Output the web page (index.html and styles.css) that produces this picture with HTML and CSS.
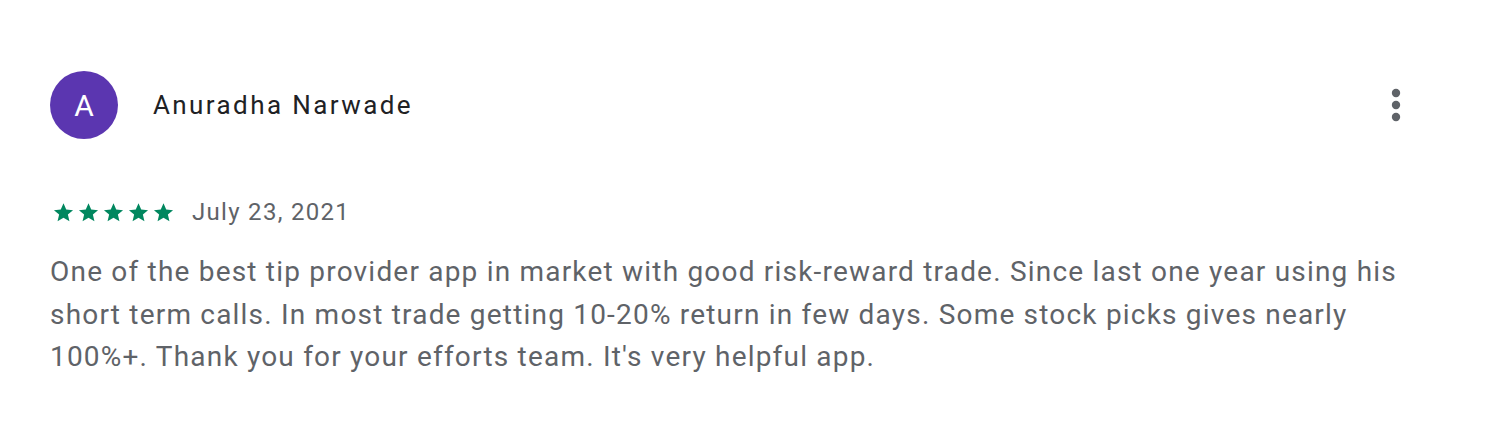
FILE: index.html
```html
<!DOCTYPE html>
<html lang="en">
<head>
<meta charset="utf-8">
<title>Review</title>
<link rel="stylesheet" href="styles.css">
</head>
<body>
<div class="review">
  <div class="review-header">
    <div class="avatar">A</div>
    <div class="author">Anuradha Narwade</div>
    <button class="menu" aria-label="More options">
      <svg width="10" height="36" viewBox="0 0 10 36"><circle cx="5" cy="6" r="4.2" fill="#5f6368"/><circle cx="5" cy="18" r="4.2" fill="#5f6368"/><circle cx="5" cy="30" r="4.2" fill="#5f6368"/></svg>
    </button>
  </div>
  <div class="meta">
    <div class="stars">
      <svg viewBox="0 0 24 24" class="star"><path d="M12 1.5l3.1 7.2 7.8.6-5.9 5.1 1.8 7.6L12 17.9 5.2 22l1.8-7.6-5.9-5.1 7.8-.6z"/></svg>
      <svg viewBox="0 0 24 24" class="star"><path d="M12 1.5l3.1 7.2 7.8.6-5.9 5.1 1.8 7.6L12 17.9 5.2 22l1.8-7.6-5.9-5.1 7.8-.6z"/></svg>
      <svg viewBox="0 0 24 24" class="star"><path d="M12 1.5l3.1 7.2 7.8.6-5.9 5.1 1.8 7.6L12 17.9 5.2 22l1.8-7.6-5.9-5.1 7.8-.6z"/></svg>
      <svg viewBox="0 0 24 24" class="star"><path d="M12 1.5l3.1 7.2 7.8.6-5.9 5.1 1.8 7.6L12 17.9 5.2 22l1.8-7.6-5.9-5.1 7.8-.6z"/></svg>
      <svg viewBox="0 0 24 24" class="star"><path d="M12 1.5l3.1 7.2 7.8.6-5.9 5.1 1.8 7.6L12 17.9 5.2 22l1.8-7.6-5.9-5.1 7.8-.6z"/></svg>
    </div>
    <span class="date">July 23, 2021</span>
  </div>
  <p class="text">One of the best tip provider app in market with good risk-reward trade. Since last one year using his short term calls. In most trade getting 10-20% return in few days. Some stock picks gives nearly 100%+. Thank you for your efforts team. It's very helpful app.</p>
</div>
</body>
</html>
```
FILE: styles.css
```css
html, body {
  margin: 0;
  padding: 0;
  background: #ffffff;
}
body {
  font-family: Roboto, "Liberation Sans", Arial, sans-serif;
  width: 1485px;
  height: 446px;
  overflow: hidden;
}
.review {
  padding: 71px 0 0 50px;
  width: 1351px;
}
.review-header {
  display: flex;
  align-items: center;
  height: 68px;
}
.avatar {
  width: 68px;
  height: 68px;
  border-radius: 50%;
  background: #5b36b0;
  color: #ffffff;
  font-size: 30px;
  display: flex;
  align-items: center;
  justify-content: center;
  flex: none;
}
.author {
  margin-left: 35px;
  font-size: 26px;
  color: #202124;
  letter-spacing: 2.4px;
  flex: 1;
}
.menu {
  border: 0;
  background: none;
  padding: 0;
  width: 10px;
  height: 36px;
  display: flex;
}
.meta {
  display: flex;
  align-items: center;
  margin-top: 60px;
  height: 26px;
}
.stars {
  display: flex;
  gap: 4px;
  margin-left: 3px;
}
.star {
  width: 21px;
  height: 21px;
  fill: #01875f;
}
.date {
  margin-left: 18px;
  font-size: 24px;
  letter-spacing: 1.3px;
  color: #5f6368;
}
.text {
  margin: 26px 0 0 0;
  font-size: 28px;
  line-height: 42.5px;
  letter-spacing: 1.2px;
  color: #5f6368;
}
```
